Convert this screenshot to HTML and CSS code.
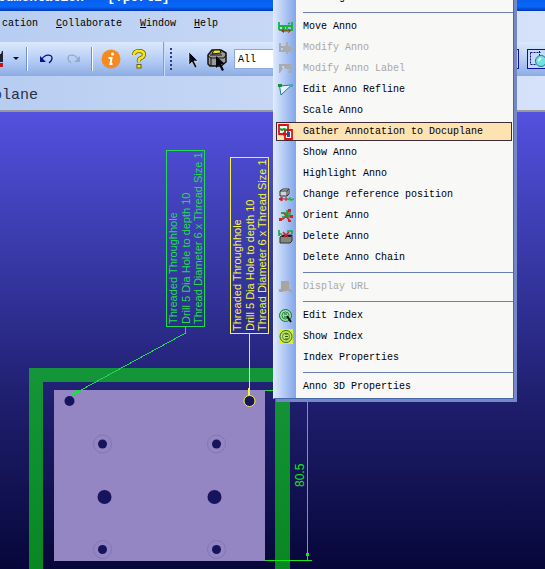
FILE: index.html
```html
<!DOCTYPE html>
<html lang="en">
<head>
<meta charset="utf-8">
<title>Documentation - [.port1]</title>
<link rel="stylesheet" href="styles.css">
</head>
<body>
<div class="app">
  <header class="titlebar"><span class="title">cumentation - [.port1]</span></header>
  <nav class="menubar">
    <button type="button">cation</button>
    <button type="button"><u>C</u>ollaborate</button>
    <button type="button"><u>W</u>indow</button>
    <button type="button"><u>H</u>elp</button>
  </nav>
  <div class="toolbar">
    <button type="button" class="tool tool-first" aria-label="Save options">
      <svg width="20" height="20"><path d="M0 5h1l1-3h1v11H0z" fill="#223"/><path d="M0 14h3v4H0z" fill="#c01818"/><path d="M13 8h6l-3 3z" fill="#112"/></svg>
    </button>
    <span class="divider"></span>
    <button type="button" class="tool tool-undo" aria-label="Undo">
      <svg width="14" height="12"><path d="M3 6C6 1 13 1 13 5q0 3-3 5" fill="none" stroke="#10108c" stroke-width="1.3"/><path d="M1 3v6h6z" fill="#10108c"/></svg>
    </button>
    <button type="button" class="tool tool-redo" aria-label="Redo">
      <svg width="14" height="12"><path d="M11 6C8 1 1 1 1 5q0 3 3 5" fill="none" stroke="#9aa9c4" stroke-width="1.3"/><path d="M13 3v6H7z" fill="#9aa9c4"/></svg>
    </button>
    <span class="divider"></span>
    <button type="button" class="tool tool-info" aria-label="Information">
      <svg width="20" height="20"><circle cx="10" cy="10" r="9.5" fill="#f58a20"/><circle cx="11.5" cy="5" r="1.6" fill="#fff"/><path d="M7.500 9h3l-1 6h2" fill="none" stroke="#fff" stroke-width="2"/></svg>
    </button>
    <button type="button" class="tool tool-help" aria-label="Help">
      <svg width="16" height="20"><path d="M3 6q0-4 5-4t5 3.500q0 2.500-3 3.500t-2 4" fill="none" stroke="#665f10" stroke-width="4"/><path d="M3 6q0-4 5-4t5 3.500q0 2.500-3 3.500t-2 4" fill="none" stroke="#f5ea10" stroke-width="2.500"/><rect x="6" y="15.500" width="4" height="3.500" fill="#f5ea10" stroke="#665f10"/></svg>
    </button>
    <span class="toolbar-end"></span>
    <span class="grip"></span>
    <button type="button" class="tool tool-select" aria-label="Select">
      <svg width="12" height="20"><path d="M1 3v13l3-3 3 6 2-1-3-6h4z" fill="#05050f" stroke="#fff" stroke-width=".5"/></svg>
    </button>
    <button type="button" class="tool tool-pick" aria-label="Pick component">
      <svg width="22" height="24"><path d="M2 8l4-5h9l5 3v9l-5 4H4l-2-2z" fill="#9b9b96" stroke="#111" stroke-width="1.500"/><path d="M2 9l3 2h13l2-3" fill="none" stroke="#111"/><path d="M6 7l2-4h6l1 3z" fill="#f6e71b" stroke="#111"/><path d="M5 11v8M4 8h12" stroke="#111"/><path d="M10 9v12l3-3 3 6 2-1-3-6h4z" fill="#05050f"/></svg>
    </button>
    <input class="filter" type="text" value="All" aria-label="Selection filter">
    <div class="toolbar-right">
      <button type="button" class="tool" aria-label="View">
        <svg width="20" height="20"><rect x=".5" y=".5" width="19" height="19" fill="#b9d1f6" stroke="#10109a"/><circle cx="12" cy="12" r="6" fill="#71d7dc"/></svg>
      </button>
      <button type="button" class="tool" aria-label="Zoom window">
        <svg width="20" height="20"><rect x=".5" y=".5" width="19" height="19" fill="#c3dafa" stroke="#10109a"/><path d="M3.500 3.500h10M3.500 3.500v12h6M12.500 2v5" fill="none" stroke="#10109a" stroke-dasharray="2 1"/><circle cx="14" cy="12" r="5.500" fill="#71e3dc" stroke="#24788a"/><path d="M11 12l3-3" stroke="#e4ffff" stroke-width="2"/></svg>
      </button>
    </div>
  </div>
  <div class="docbar"><span class="docname">plane</span></div>
  <main class="canvas">
    <svg class="drawing" role="img" aria-label="Panel drawing">
      <defs>
        <linearGradient id="frame" gradientUnits="userSpaceOnUse" x1="0" y1="368" x2="0" y2="569"><stop offset="0" stop-color="#159539"/><stop offset="1" stop-color="#088722"/></linearGradient>
      </defs>
      <g transform="translate(0 -112)">
        <path class="frame" d="M29 368H290V900H275V382H43V900H29z"/>
        <path class="plate" d="M54 390H265V561H54z"/>
        <g class="ring"><circle cx="102.500" cy="444" r="9"/><circle cx="216.500" cy="444" r="9"/><circle cx="102.500" cy="549.500" r="9"/><circle cx="216.500" cy="549.500" r="9"/></g>
        <g class="hole"><circle cx="69.500" cy="401" r="5"/><circle cx="102.500" cy="444" r="4.500"/><circle cx="216.500" cy="444" r="4.500"/><circle cx="104.500" cy="497" r="7"/><circle cx="214.500" cy="497" r="7"/><circle cx="102.500" cy="549.500" r="4.500"/><circle cx="216.500" cy="549.500" r="4.500"/></g>
        <g class="note green">
          <path d="M166.500 150.500h38v176h-38zM185.500 326v7L70 396"/>
          <path d="M70 396l8-6 2 2z"/>
          <text transform="translate(177 324) rotate(-90)">Threaded Throughhole</text>
          <text transform="translate(190 324) rotate(-90)">Drill 5 Dia Hole to depth 10</text>
          <text transform="translate(202 324) rotate(-90)">Thread Diameter 6 x Thread Size 1</text>
        </g>
        <g class="note yellow">
          <path d="M230.500 157.500h38v176h-38zM249.500 333v62"/>
          <path d="M248.500 388h1v8h-1z"/>
          <circle class="picked" cx="249.500" cy="401" r="5.500"/>
          <text transform="translate(241 331) rotate(-90)">Threaded Throughhole</text>
          <text transform="translate(254 331) rotate(-90)">Drill 5 Dia Hole to depth 10</text>
          <text transform="translate(266 331) rotate(-90)">Thread Diameter 6 x Thread Size 1</text>
        </g>
        <g class="note lime">
          <path d="M265 390.500h47M265 560.500h47M307.500 390v170"/>
          <path d="M306.500 553h2l-1 6z"/>
          <text class="dim" transform="translate(304 487) rotate(-90)">80.5</text>
        </g>
      </g>
    </svg>
  </main>
</div>

<div class="context-menu" role="menu">
  <button type="button" role="menuitem"><span class="icon"></span>Viewing</button>
  <hr>
  <button type="button" role="menuitem"><svg class="icon" viewBox="0 0 16 16"><path d="M1 3v8M1 7h4v4H1M6 7h3v4H6zM10 7h4v4h-4M14 3v8M10 5l2-1" fill="none" stroke="#16b53a" stroke-width="1.800"/><path d="M3 12l3-2v4zM13 12l-3-2v4zM5 11.500h6v1H5z" fill="#d01c1c"/></svg>Move Anno</button>
  <button type="button" role="menuitem" disabled><svg class="icon" viewBox="0 0 16 16"><path d="M2 3v8h4V7H2M7 7h3v4H7M12 6v6M9 2v12M6 9h9" fill="none" stroke="#a9abaf" stroke-width="2"/></svg>Modify Anno</button>
  <button type="button" role="menuitem" disabled><svg class="icon" viewBox="0 0 16 16"><path d="M1 3h13v9h-4l2-4H8L6 6l-4 6H1z" fill="#a9abaf"/><path d="M4 5h2v2H4z" fill="#c6d5ee"/></svg>Modify Anno Label</button>
  <button type="button" role="menuitem"><svg class="icon" viewBox="0 0 16 16"><path d="M3 13L1.500 4l12-1L3 13" fill="#e5f3f6" stroke="#17808e"/><path d="M0 2h4v3H0z" fill="#178f3e"/><path d="M12 2h3v3h-3z" fill="#4aa3b7"/></svg>Edit Anno Refline</button>
  <button type="button" role="menuitem"><span class="icon"></span>Scale Anno</button>
  <button type="button" role="menuitem" class="active"><svg class="icon" viewBox="0 0 16 16"><path d="M1 1h9v9H1zM7 6h7v9H7z" fill="#fff" stroke="#dc1414" stroke-width="1.800"/><path d="M2 5l2 1 2-1 3 1" fill="none" stroke="#129b37" stroke-width="2"/><path d="M9 8h3v5H9z" fill="#284ca0"/><path d="M5 8l4 2-4 2z" fill="#dc1414"/></svg>Gather Annotation to Docuplane</button>
  <button type="button" role="menuitem"><span class="icon"></span>Show Anno</button>
  <button type="button" role="menuitem"><span class="icon"></span>Highlight Anno</button>
  <button type="button" role="menuitem"><svg class="icon" viewBox="0 0 16 16"><path d="M2 4l3-2h6v5L9 9H2z" fill="#d3d3d3" stroke="#333"/><path d="M2 4h7v5M9 4l2-2" fill="none" stroke="#333"/><path d="M1 12l3-2v4zM4 12h6M8 10v4" fill="#d01c1c" stroke="#d01c1c"/><path d="M10 13l2-2 1 2 3-1" fill="none" stroke="#16b53a" stroke-width="1.500"/></svg>Change reference position</button>
  <button type="button" role="menuitem"><svg class="icon" viewBox="0 0 16 16"><path d="M3 5h3l2 3h6M11 2L8 8l-3 3H1M8 8l4 5" fill="none" stroke="#d02424" stroke-width="1.600"/><path d="M4 5h4v4H4M8 3h4v3H8M9 9h4" fill="none" stroke="#16a53a" stroke-width="1.400"/><path d="M10 1h3v3h-3zM12 7h3v3h-3zM1 10h3v3H1zM10 12h3v2h-3z" fill="#d02424"/></svg>Orient Anno</button>
  <button type="button" role="menuitem"><svg class="icon" viewBox="0 0 16 16"><path d="M2 8l3-2h9v6l-2 2H2z" fill="#85857e" stroke="#333"/><path d="M3 8h10l1-2H5z" fill="#222"/><path d="M1 1v6M1 5h3M9 2h5v3" fill="none" stroke="#16a53a" stroke-width="1.600"/><path d="M5 3l5 5M11 3L6 8" stroke="#d02424" stroke-width="1.600"/></svg>Delete Anno</button>
  <button type="button" role="menuitem"><span class="icon"></span>Delete Anno Chain</button>
  <hr>
  <button type="button" role="menuitem" disabled><svg class="icon" viewBox="0 0 16 16"><path d="M3 2h8v8l3 1v3l-3-2H7l-3 1H1v-3h2z" fill="#a9a49c"/></svg>Display URL</button>
  <hr>
  <button type="button" role="menuitem"><svg class="icon" viewBox="0 0 16 16"><circle cx="7.500" cy="7.500" r="6" fill="#9fdcab" stroke="#1c6e3c"/><circle cx="7.500" cy="7.500" r="3.500" fill="none" stroke="#1c8e3c"/><path d="M6 6h3M6 9h3" stroke="#145a2c"/><path d="M9 8l4 6" stroke="#111" stroke-width="2"/></svg>Edit Index</button>
  <button type="button" role="menuitem"><svg class="icon" viewBox="0 0 16 16"><path d="M1 0h14v15H1z" fill="#dff01c"/><circle cx="8" cy="7.500" r="6" fill="#c5e368" stroke="#2c6e2c"/><circle cx="8" cy="7.500" r="3.500" fill="none" stroke="#4c8e2c"/><path d="M7 5h3M7 7.500h3M7 10h3" stroke="#2c5a1c"/></svg>Show Index</button>
  <button type="button" role="menuitem"><span class="icon"></span>Index Properties</button>
  <hr>
  <button type="button" role="menuitem"><span class="icon"></span>Anno 3D Properties</button>
</div>
</body>
</html>
```
FILE: styles.css
```css
* { box-sizing: border-box; }
html, body { height: 100%; }
body {
  margin: 0;
  overflow: hidden;
  font: 10px/12px "Liberation Mono", monospace;
  color: #000;
}
button {
  border: 0;
  padding: 0;
  background: none;
  font: inherit;
  color: inherit;
}
svg { display: block; }

.app {
  display: flex;
  flex-direction: column;
  height: 100%;
  background: linear-gradient(90deg, #b7cdf1, #d6e2fa);
}
.titlebar {
  display: flex;
  align-items: flex-end;
  height: 11px;
  padding-bottom: 6px;
  background: linear-gradient(#0560f0, #0a66fa 60%, #0038b4);
  color: #fff;
}
.title {
  margin-left: -2px;
  font-size: 13px;
  line-height: 14px;
  font-weight: bold;
  white-space: pre;
}
.menubar {
  display: flex;
  align-items: center;
  gap: 18px;
  height: 31px;
  padding: 0 2px 6px;
}

.toolbar {
  display: flex;
  align-items: center;
  height: 34px;
  overflow: hidden;
  background: linear-gradient(#dce8fc, #b7cff6 50%, #8dace4);
}
.tool { flex: none; }
.divider {
  width: 2px;
  height: 24px;
  border-left: 1px solid #6f8fd0;
  border-right: 1px solid #fff;
}
.tool-first { margin-right: 6px; }
.tool-undo { margin: 0 14px 0 11px; }
.tool-redo { margin-right: 10px; }
.tool-info { margin-left: 8px; }
.tool-help { margin: 0 16px 0 10px; }
.toolbar-end {
  width: 2px;
  height: 34px;
  background: #7f9fdc;
  border-right: 1px solid #c9dbfa;
}
.grip {
  width: 2px;
  height: 22px;
  margin: 0 16px 0 5px;
  background: repeating-linear-gradient(#2c4078 0 2px, transparent 2px 4px);
}
.tool-select { margin-right: 6px; }
.filter {
  width: 160px;
  height: 20px;
  margin-left: 6px;
  padding: 0 3px;
  border: 1px solid #8ba9dc;
  border-radius: 0;
  background: #fff;
  font: inherit;
}
.toolbar-right {
  display: flex;
  gap: 8px;
  margin: 0 -2px 0 auto;
}

.docbar {
  display: flex;
  align-items: center;
  height: 36px;
  padding-top: 6px;
  border-bottom: 2px solid #96989a;
  overflow: hidden;
}
.docname {
  margin-left: -7px;
  font-size: 15px;
  line-height: 18px;
  color: #27304a;
}

.canvas {
  flex: 1;
  min-height: 0;
  background: linear-gradient(#5351df, #3535a0 36%, #1d1d6b 65%, #07073a);
}
.drawing {
  width: 100%;
  height: 100%;
  font: 11px "Liberation Sans", sans-serif;
}
.frame { fill: url(#frame); }
.plate { fill: #9485c3; }
.hole { fill: #15145c; }
.ring { fill: none; stroke: #8475b8; }
.note { fill: none; stroke-width: 1; }
.note path { shape-rendering: crispEdges; }
.note text { stroke: none; }
.note .dim { font-size: 12px; }
.green { stroke: #1fdc4c; }
.green text { fill: #1fdc4c; }
.yellow { stroke: #f4f43c; }
.yellow text { fill: #f4f43c; }
.lime { stroke: #14e81e; }
.lime text { fill: #14e81e; }
.picked { fill: #15145c; }

.context-menu {
  position: absolute;
  top: -15px;
  left: 273px;
  display: flex;
  flex-direction: column;
  width: 241px;
  padding: 1px 0;
  border: 1px solid #4668ac;
  border-left-color: #e2ecfc;
  background: linear-gradient(90deg, #dbe8fd, #82a6e8) 0 0 / 22px 100% no-repeat #f8f8f7;
  box-shadow: 3px 3px 0 #7688c4;
}
.context-menu button {
  display: flex;
  align-items: center;
  gap: 9px;
  height: 19px;
  margin: 1px 1px 1px 2px;
  padding-left: 1px;
  border: 1px solid transparent;
  text-align: left;
  white-space: nowrap;
}
.context-menu button:disabled { color: #aaa79f; }
.context-menu .active {
  border-color: #3c2c38;
  background: #fde3b2;
}
.context-menu hr {
  width: 210px;
  height: 1px;
  margin: 4px 0 3px auto;
  border: 0;
  background: #6a7fb0;
}
.icon {
  flex: none;
  width: 16px;
  height: 16px;
}
```
